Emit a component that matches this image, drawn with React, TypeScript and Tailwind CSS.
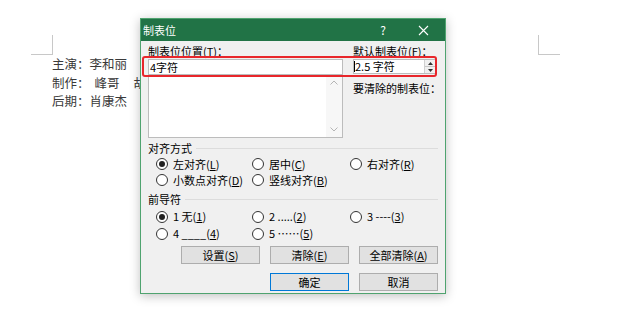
import React from "react";

const F = { fontFamily: '"Noto Sans CJK SC", "Noto Sans", sans-serif' };

function Radio({ checked, label }: { checked?: boolean; label: React.ReactNode }) {
  return (
    <div className="flex items-center h-full">
      <span className="w-[12px] h-[12px] rounded-full border border-[#333333] bg-white flex items-center justify-center shrink-0">
        {checked && <span className="w-[6px] h-[6px] rounded-full bg-[#222222]" />}
      </span>
      <span className="ml-[5px] text-[11px] leading-[13px] whitespace-nowrap">{label}</span>
    </div>
  );
}

function Heading({ text }: { text: string }) {
  return (
    <div className="flex items-center h-[14px]">
      <span className="text-[11px] leading-[13px] whitespace-nowrap">{text}</span>
      <span className="flex-1 ml-[4px] border-t border-[#dcdcdc]" />
    </div>
  );
}

function Btn({ children, primary }: { children: React.ReactNode; primary?: boolean }) {
  return (
    <div
      className={
        "w-[79px] h-[18px] flex items-center justify-center text-[11px] leading-[13px] bg-[#e1e1e1] border " +
        (primary ? "border-[#0078d7]" : "border-[#adadad]")
      }
    >
      {children}
    </div>
  );
}

export default function App() {
  return (
    <div className="relative w-[620px] h-[309px] bg-white overflow-hidden" style={F}>
      {/* document */}
      <div className="pt-[35px]">
        <div className="flex justify-between pl-[31px] pr-[60px]">
          <div className="w-[22px] h-[20px] border-r border-b border-[#c8c8c8]" />
          <div className="w-[22px] h-[20px] border-l border-b border-[#c8c8c8]" />
        </div>
        <div className="pl-[52px] text-[12.5px] leading-[18.5px] text-[#3a3a3a]">
          <div>主演：李和丽</div>
          <div className="flex">
            <span>制作：</span>
            <span className="ml-[5px]">峰哥</span>
            <span className="ml-[14px]">胡</span>
          </div>
          <div>后期：肖康杰</div>
        </div>
      </div>

      {/* dialog */}
      <div className="absolute left-[140px] top-[18px] w-[306px] h-[276px] border border-[#4fa36f] bg-[#f0f0f0] shadow-[0_2px_10px_rgba(0,0,0,0.25)] flex flex-col text-black">
        <div className="h-[22px] bg-[#217346] flex items-center text-white shrink-0">
          <span className="ml-[2px] text-[11px]">制表位</span>
          <span className="ml-auto mr-[32px] text-[12px]">?</span>
          <svg width="11" height="11" viewBox="0 0 11 11" className="mr-[16px]">
            <path d="M1 1 L10 10 M10 1 L1 10" stroke="white" strokeWidth="1.1" />
          </svg>
        </div>

        <div className="px-[7px] pt-[4px] flex flex-col">
          <div className="flex">
            <div className="w-[195px] flex flex-col">
              <div className="h-[14px] text-[11px] leading-[13px]">
                制表位位置(<u>T</u>)：
              </div>
              <div className="h-[16px] bg-white border border-[#bcbcbc] flex items-center pl-[1px] text-[11px] leading-[13px]">
                4字符
              </div>
              <div className="-mt-px h-[64px] bg-white border border-[#bcbcbc] flex justify-end">
                <div className="w-[16px] bg-[#f7f7f7] flex flex-col items-center justify-between py-[5px]">
                  <svg width="8" height="5" viewBox="0 0 8 5">
                    <path d="M0.5 4.5 L4 1 L7.5 4.5" stroke="#b5b5b5" fill="none" />
                  </svg>
                  <svg width="8" height="5" viewBox="0 0 8 5">
                    <path d="M0.5 0.5 L4 4 L7.5 0.5" stroke="#b5b5b5" fill="none" />
                  </svg>
                </div>
              </div>
            </div>
            <div className="ml-[10px] w-[84px] flex flex-col">
              <div className="h-[14px] text-[11px] leading-[13px] whitespace-nowrap">
                默认制表位(<u>F</u>)：
              </div>
              <div className="h-[15px] flex bg-white border border-[#bcbcbc]">
                <div className="flex-1 flex items-center text-[11px] leading-[13px]">
                  <span className="w-px h-[11px] bg-black" />
                  <span>2.5 字符</span>
                </div>
                <div className="w-[12px] flex flex-col border-l border-[#d0d0d0] bg-[#f0f0f0]">
                  <div className="flex-1 flex items-center justify-center border-b border-[#c8c8c8]">
                    <svg width="5" height="3" viewBox="0 0 5 3"><path d="M0 3 L2.5 0 L5 3 Z" fill="#333" /></svg>
                  </div>
                  <div className="flex-1 flex items-center justify-center">
                    <svg width="5" height="3" viewBox="0 0 5 3"><path d="M0 0 L2.5 3 L5 0 Z" fill="#333" /></svg>
                  </div>
                </div>
              </div>
              <div className="mt-[8px] h-[14px] text-[11px] leading-[13px] whitespace-nowrap">要清除的制表位：</div>
            </div>
          </div>

          <div className="mt-[3px]">
            <Heading text="对齐方式" />
          </div>
          <div className="mt-[1px] pl-[8px] grid grid-cols-[96px_98px_1fr] auto-rows-[16px]">
            <Radio checked label={<>左对齐(<u>L</u>)</>} />
            <Radio label={<>居中(<u>C</u>)</>} />
            <Radio label={<>右对齐(<u>R</u>)</>} />
            <Radio label={<>小数点对齐(<u>D</u>)</>} />
            <Radio label={<>竖线对齐(<u>B</u>)</>} />
          </div>

          <div className="mt-[4px]">
            <Heading text="前导符" />
          </div>
          <div className="mt-[2px] pl-[8px] grid grid-cols-[96px_98px_1fr] auto-rows-[17px]">
            <Radio checked label={<>1 无(<u>1</u>)</>} />
            <Radio label={<>2 .....(<u>2</u>)</>} />
            <Radio label={<>3 ----(<u>3</u>)</>} />
            <Radio label={<>4 ____(<u>4</u>)</>} />
            <Radio label={<>5 ……(<u>5</u>)</>} />
          </div>

          <div className="mt-[4px] flex justify-end gap-[10px]">
            <Btn>设置(<u>S</u>)</Btn>
            <Btn>清除(<u>E</u>)</Btn>
            <Btn>全部清除(<u>A</u>)</Btn>
          </div>
          <div className="mt-[9px] flex justify-end gap-[10px]">
            <Btn primary>确定</Btn>
            <Btn>取消</Btn>
          </div>
        </div>
      </div>

      {/* red annotation */}
      <div className="absolute left-[142px] top-[56px] w-[295px] h-[21px] border-2 border-[#e8262b] rounded-[3px]" />
    </div>
  );
}
